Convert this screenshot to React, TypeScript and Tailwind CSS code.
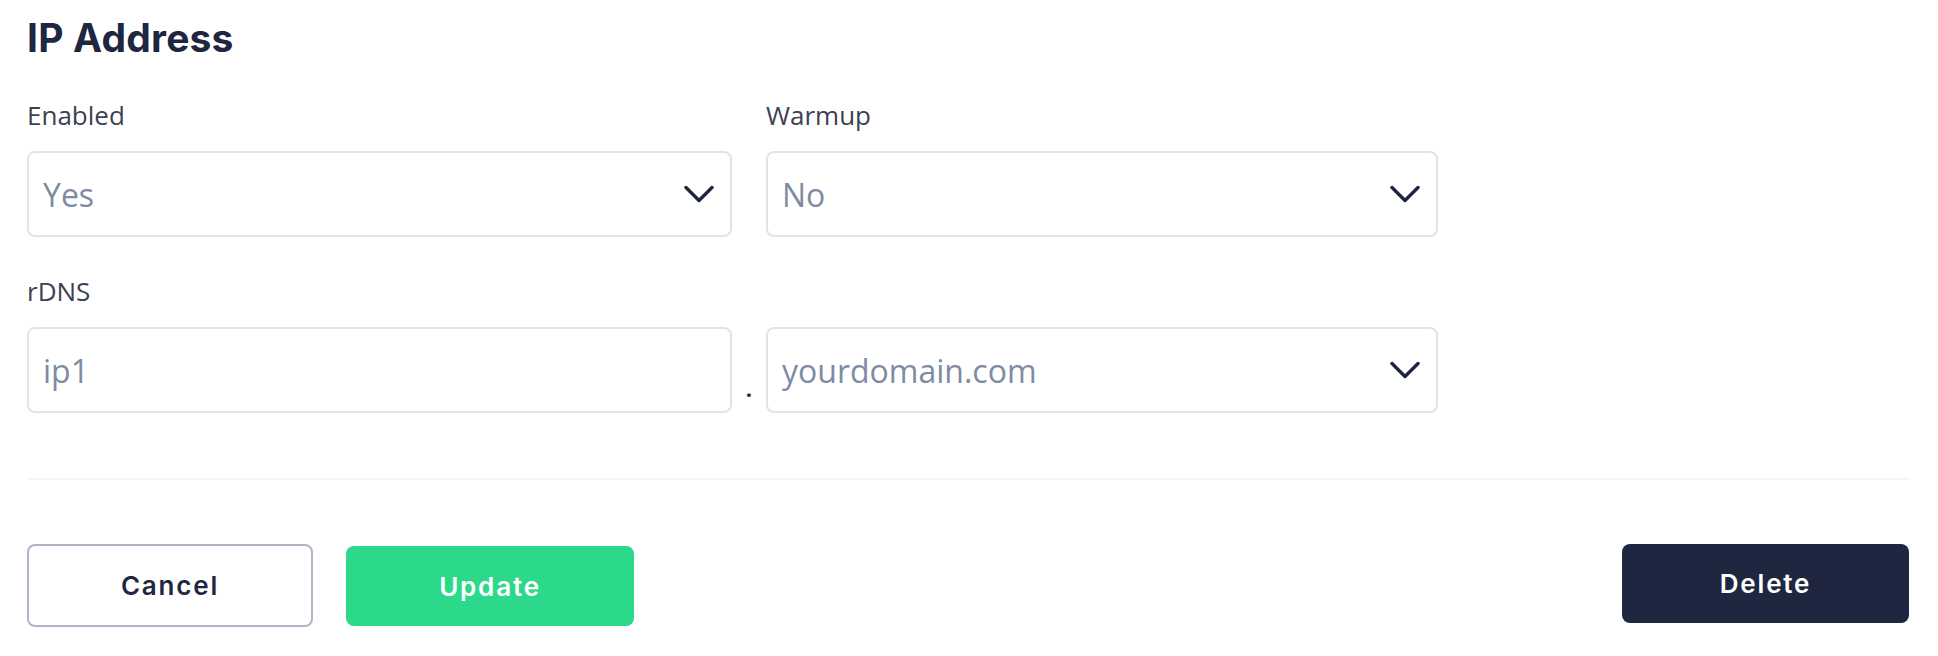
// ip address edit form: enabled / warmup selects, rDNS host + domain, action buttons

const labelCls = "text-[26px] leading-[36px] text-[#3b4252] font-['Open_Sans',sans-serif]";
const fieldCls =
    "h-[86px] border-2 border-[#dfe3ee] rounded-[8px] bg-white flex items-center justify-between pl-[14px] pr-[16px]";
const valueCls = "text-[32px] text-[#7e8ba3] font-['Open_Sans',sans-serif] pt-[2px]";

function Chevron() {
    return (
        <svg width="30" height="18" viewBox="0 0 30 18" fill="none" className="shrink-0">
            <polyline points="2,2.5 15,15.5 28,2.5" stroke="#1e2640" strokeWidth="3.4" strokeLinecap="round" strokeLinejoin="round" />
        </svg>
    );
}

function SelectBox({ value }: { value: string }) {
    return (
        <div className={fieldCls}>
            <span className={valueCls}>{value}</span>
            <Chevron />
        </div>
    );
}

export default function App() {
    return (
        <div className="w-[1938px] h-[656px] bg-white pl-[27px] pr-[28px] pt-[15px] font-['Open_Sans',sans-serif]">
            <h1 className="text-[39px] leading-[46px] font-bold text-[#1e2640] font-['Inter',sans-serif] tracking-[0.005em]">
                IP Address
            </h1>

            {/* enabled / warmup */}
            <div className="grid grid-cols-[705px_34px_672px] mt-[36px]">
                <label className={labelCls}>Enabled</label>
                <div />
                <label className={labelCls}>Warmup</label>
            </div>
            <div className="grid grid-cols-[705px_34px_672px] mt-[18px]">
                <SelectBox value="Yes" />
                <div />
                <SelectBox value="No" />
            </div>

            {/* rDNS */}
            <div className="grid grid-cols-[705px_34px_672px] mt-[36px]">
                <label className={labelCls}>rDNS</label>
            </div>
            <div className="grid grid-cols-[705px_34px_672px] mt-[18px]">
                <div className={fieldCls}>
                    <span className={valueCls}>ip1</span>
                </div>
                <div className="flex items-end justify-center">
                    <span className="text-[22px] leading-[16px] font-bold text-[#1e2640] mb-[17px]">.</span>
                </div>
                <SelectBox value="yourdomain.com" />
            </div>

            <div className="h-[2px] bg-[#f2f5fa] mt-[65px]" />

            {/* actions */}
            <div className="flex justify-between items-start mt-[64px] font-['Inter',sans-serif]">
                <div className="flex items-start gap-[33px]">
                    <button className="w-[286px] h-[83px] border-2 border-[#aeb6c6] rounded-[8px] bg-white text-[#1e2640] text-[26px] font-semibold tracking-[0.07em]">
                        Cancel
                    </button>
                    <button className="w-[288px] h-[80px] mt-[2px] rounded-[8px] bg-[#2cd98a] text-white text-[26px] font-semibold tracking-[0.07em]">
                        Update
                    </button>
                </div>
                <button className="w-[287px] h-[79px] mr-[1px] rounded-[8px] bg-[#1f2740] text-white text-[26px] font-semibold tracking-[0.07em]">
                    Delete
                </button>
            </div>
        </div>
    );
}
